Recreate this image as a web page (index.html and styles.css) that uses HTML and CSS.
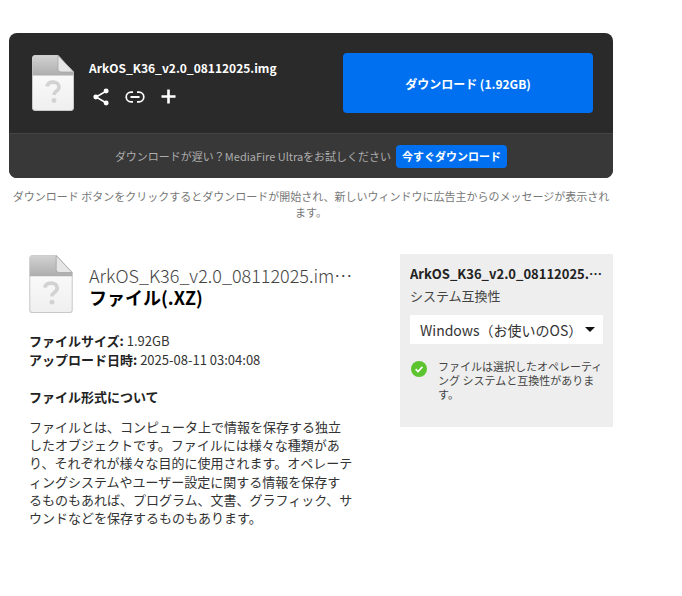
FILE: index.html
```html
<!DOCTYPE html>
<html lang="ja">
<head>
<meta charset="utf-8">
<title>ArkOS_K36_v2.0_08112025.img</title>
<link rel="stylesheet" href="styles.css">
</head>
<body>
<svg class="defs" width="0" height="0" aria-hidden="true">
  <defs>
    <linearGradient id="fold-top" x1="0" y1="0" x2="0" y2="1"><stop offset="0" stop-color="#d2d2d2"/><stop offset="1" stop-color="#adadad"/></linearGradient>
    <linearGradient id="fold-body" x1="0" y1="0" x2="0" y2="1"><stop offset="0" stop-color="#ffffff"/><stop offset="1" stop-color="#efefef"/></linearGradient>
    <symbol id="file" viewBox="0 0 42 56">
      <path d="M3 .5H26L41.5 17V53a2.5 2.5 0 0 1-2.5 2.5H3A2.5 2.5 0 0 1 .5 53V3A2.5 2.5 0 0 1 3 .5Z" fill="url(#fold-body)" stroke="#c9c9c9" stroke-width="1"/>
      <path d="M3 .5H26L41.5 17V20.5H.5V3A2.5 2.5 0 0 1 3 .5Z" fill="url(#fold-top)"/>
      <path d="M26 .5L41.5 17H29a3 3 0 0 1-3-3Z" fill="#e6e6e6" stroke="#a0a0a0" stroke-width=".7"/>
      <path d="M15 31.5c.6-3 3-4.4 6-4.4 3.5 0 6 2 6 4.8 0 2.4-1.5 3.5-3 4.6-1.4 1-2 1.7-2 3.6" fill="none" stroke="#d2d2d2" stroke-width="3.6"/>
      <circle cx="22" cy="45.5" r="2.4" fill="#d2d2d2"/>
    </symbol>
  </defs>
</svg>

<main class="page">
  <section class="card">
    <div class="card-top">
      <svg class="file-icon-sm"><use href="#file"/></svg>
      <div class="card-info">
        <div class="card-name">ArkOS_K36_v2.0_08112025.img</div>
        <div class="card-actions">
          <svg class="act-share" viewBox="0 0 18 20"><path d="M14.5 3.5L3.5 10l11 6.5" fill="none" stroke="#fff" stroke-width="1.8"/><circle cx="14.8" cy="3.3" r="2.8" fill="#fff"/><circle cx="3.2" cy="10" r="2.8" fill="#fff"/><circle cx="14.8" cy="16.7" r="2.8" fill="#fff"/></svg>
          <svg class="act-link" viewBox="0 0 20 12"><path d="M8 1.2H6a4.8 4.8 0 0 0 0 9.6h2M12 1.2h2a4.8 4.8 0 0 1 0 9.6h-2" fill="none" stroke="#fff" stroke-width="1.7"/><path d="M5.5 6h9" stroke="#fff" stroke-width="1.8"/></svg>
          <svg class="act-plus" viewBox="0 0 16 16"><path d="M8 .5v15M.5 8h15" stroke="#fff" stroke-width="2.8"/></svg>
        </div>
      </div>
      <a class="download-btn">ダウンロード (1.92GB)</a>
    </div>
    <div class="card-foot">
      <span class="foot-text">ダウンロードが遅い？MediaFire Ultraをお試しください</span>
      <a class="foot-btn">今すぐダウンロード</a>
    </div>
  </section>

  <p class="notice">ダウンロード ボタンをクリックするとダウンロードが開始され、新しいウィンドウに広告主からのメッセージが表示されます。</p>

  <div class="details">
    <div class="left">
      <div class="file-head">
        <svg class="file-icon-lg"><use href="#file"/></svg>
        <div class="file-titles">
          <div class="file-name">ArkOS_K36_v2.0_08112025.img.xz</div>
          <div class="file-type">ファイル(.XZ)</div>
        </div>
      </div>
      <div class="meta">
        <div><b>ファイルサイズ:</b> 1.92GB</div>
        <div><b>アップロード日時:</b> 2025-08-11 03:04:08</div>
      </div>
      <h2 class="about-title">ファイル形式について</h2>
      <p class="about">ファイルとは、コンピュータ上で情報を保存する独立<br>したオブジェクトです。ファイルには様々な種類があ<br>り、それぞれが様々な目的に使用されます。オペレーテ<br>ィングシステムやユーザー設定に関する情報を保存す<br>るものもあれば、プログラム、文書、グラフィック、サ<br>ウンドなどを保存するものもあります。</p>
    </div>
    <aside class="panel">
      <div class="panel-name">ArkOS_K36_v2.0_08112025.img.xz</div>
      <div class="panel-sub">システム互換性</div>
      <div class="select"><span>Windows（お使いのOS）</span><i class="caret"></i></div>
      <div class="compat">
        <svg class="check" viewBox="0 0 16 16"><circle cx="8" cy="8" r="8" fill="#5cc42f"/><path d="M4.6 8.2l2.4 2.3 4.4-4.6" fill="none" stroke="#fff" stroke-width="1.6"/></svg>
        <p class="compat-text">ファイルは選択したオペレーティング システムと互換性があります。</p>
      </div>
    </aside>
  </div>
</main>
</body>
</html>
```
FILE: styles.css
```css
* { box-sizing: border-box; }
html, body { margin: 0; background: #fff; }
body {
  font-family: "Noto Sans CJK JP", "Noto Sans", sans-serif;
  color: #222;
  font-size: 13px;
}
.defs { position: absolute; }
.page { width: 604px; margin: 33px 0 0 9px; }

.card { background: #2a2a2a; border-radius: 8px; overflow: hidden; height: 145px; }
.card-top { height: 100px; display: flex; align-items: center; padding: 0 20px 0 23px; }
.file-icon-sm { width: 42px; height: 56px; flex: none; margin-top: -1px; }
.card-info { flex: 1; min-width: 0; margin-left: 15px; padding-bottom: 1px; }
.card-name { color: #fff; font-weight: 700; font-size: 12px; line-height: 18px; }
.card-actions { display: flex; align-items: center; margin-top: 10px; height: 20px; padding-left: 4px; }
.act-share { width: 16px; height: 18px; }
.act-link { width: 20px; height: 12px; margin-left: 16px; }
.act-plus { width: 15px; height: 15px; margin-left: 16px; }
.download-btn {
  width: 250px; height: 60px; flex: none;
  background: #0070f0; border-radius: 4px;
  color: #fff; font-weight: 700; font-size: 12px;
  display: flex; align-items: center; justify-content: center;
}
.card-foot {
  height: 45px; background: #383838; border-top: 1px solid #444;
  display: flex; align-items: center; justify-content: center; gap: 5px;
}
.foot-text { color: #adadad; font-size: 11px; }
.foot-btn {
  background: #0070f0; color: #fff; font-weight: 700; font-size: 11px;
  border-radius: 4px; height: 23px; width: 111px;
  display: flex; align-items: center; justify-content: center;
}

.notice { margin: 10px 0 0; text-align: center; color: #777; font-size: 11px; line-height: 16px; }

.details { display: flex; justify-content: space-between; align-items: flex-start; margin-top: 34px; padding-left: 20px; }
.left { width: 324px; }
.file-head { display: flex; align-items: center; height: 59px; }
.file-icon-lg { width: 44px; height: 58px; flex: none; margin-top: 1px; }
.file-titles { margin-left: 16px; min-width: 0; flex: 1; padding-top: 4px; }
.file-name { font-size: 18px; line-height: 22px; color: #444; font-weight: 300; white-space: nowrap; overflow: hidden; text-overflow: ellipsis; }
.file-type { font-size: 18px; line-height: 22px; font-weight: 700; color: #000; }
.meta { margin-top: 18px; line-height: 19px; font-size: 13px; color: #333; }
.meta b { font-weight: 700; color: #222; }
.about-title { margin: 19px 0 0; font-size: 13px; line-height: 18px; font-weight: 700; }
.about { margin: 12px 0 0; line-height: 18.2px; font-size: 13px; white-space: nowrap; color: #333; }

.panel { width: 213px; height: 173px; background: #eee; padding: 10px; }
.panel-name { font-weight: 700; font-size: 13px; line-height: 20px; white-space: nowrap; overflow: hidden; text-overflow: ellipsis; }
.panel-sub { font-size: 13px; line-height: 20px; margin-top: 2px; color: #444; }
.select {
  background: #fff; height: 29px; margin-top: 9px; padding: 0 8px 0 10px;
  display: flex; align-items: center; justify-content: space-between;
  font-size: 14px; color: #333;
}
.caret { width: 0; height: 0; border-left: 5px solid transparent; border-right: 5px solid transparent; border-top: 5px solid #111; }
.compat { display: flex; margin-top: 15px; }
.check { width: 16px; height: 16px; flex: none; margin: 2px 11px 0 1px; }
.compat-text { margin: 0; font-size: 11px; line-height: 14px; color: #444; }
```
